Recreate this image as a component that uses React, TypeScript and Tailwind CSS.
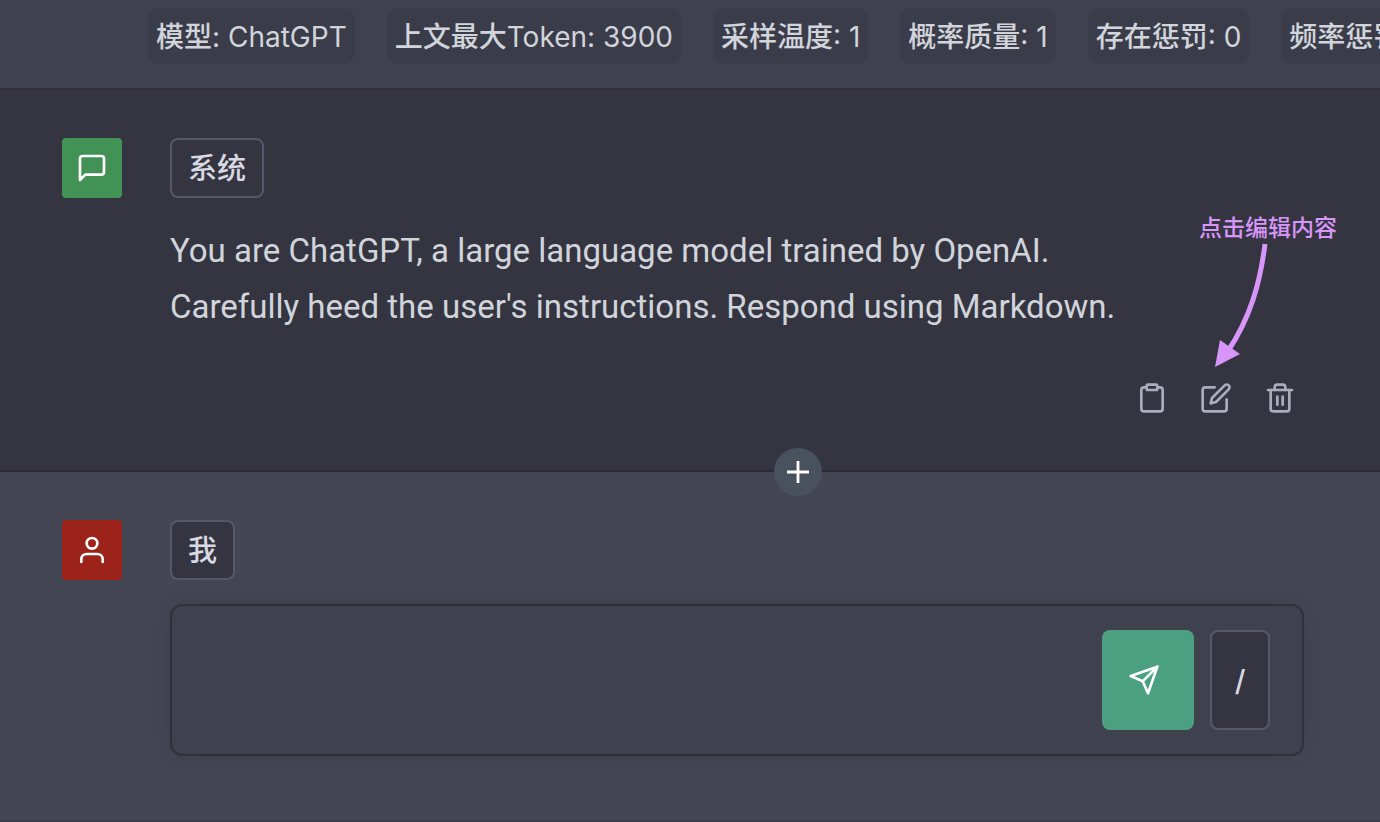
import type { ReactNode } from 'react';
import { FiClipboard, FiEdit, FiMessageSquare, FiSend, FiTrash2, FiUser } from 'react-icons/fi';

const settings = [
  { label: '模型', value: 'ChatGPT' },
  { label: '上文最大Token', value: '3900' },
  { label: '采样温度', value: '1' },
  { label: '概率质量', value: '1' },
  { label: '存在惩罚', value: '0' },
  { label: '频率惩罚', value: '0' },
];

function IconButton({ label, children }: { label: string; children: ReactNode }) {
  return (
    <button type="button" aria-label={label} className="rounded-lg p-2 text-[#acacbe] hover:text-white">
      {children}
    </button>
  );
}

function RoleButton({ children }: { children: ReactNode }) {
  return (
    <button
      type="button"
      className="h-[60px] self-start rounded-lg border-2 border-[#565869] bg-[#343541] px-4 pt-0.5 text-[29px] leading-10 font-medium text-[#d9d9e3]"
    >
      {children}
    </button>
  );
}

function Hint() {
  return (
    <div className="pointer-events-none absolute top-[125px] right-[43px] text-[#d896fa]">
      <p className="text-[23px] leading-7 font-medium">点击编辑内容</p>
      <svg className="absolute top-[27px] left-[13px]" width="60" height="128" viewBox="0 0 60 128" fill="none">
        <path d="M53 2C48 42 38 76 16 109" stroke="currentColor" strokeWidth="5" />
        <path d="M3 125L8 98L28 112Z" fill="currentColor" />
      </svg>
    </div>
  );
}

export default function App() {
  return (
    <div className="min-h-screen w-full overflow-x-hidden bg-[#444654] font-[Roboto,'Noto_Sans_CJK_SC_Medium','Noto_Sans_CJK_SC',sans-serif] text-[#d1d5db]">
      {/* Conversation settings */}
      <header className="flex gap-8 overflow-hidden border-b-2 border-[#303139] bg-[#40414f] pt-2 pb-6 pl-[148px] font-[Inter,'Noto_Sans_CJK_SC_Medium','Noto_Sans_CJK_SC',sans-serif]">
        {settings.map((item) => (
          <span
            key={item.label}
            className="shrink-0 rounded-xl bg-[#3b3c49] px-2 pt-0.5 text-[28px] leading-[54px] whitespace-nowrap"
          >
            {item.label}: {item.value}
          </span>
        ))}
      </header>

      {/* System message */}
      <section className="relative flex gap-12 border-b-2 border-[#2b2c34] bg-[#343541] py-12 pr-[76px] pl-[62px]">
        <div className="flex size-[60px] shrink-0 items-center justify-center rounded-sm bg-[#419254] text-white">
          <FiMessageSquare size={32} />
        </div>
        <div className="flex min-w-0 flex-1 flex-col">
          <RoleButton>系统</RoleButton>
          <p className="mt-[25px] mb-[39px] text-[33px] leading-14">
            You are ChatGPT, a large language model trained by OpenAI.
            <br />
            Carefully heed the user&apos;s instructions. Respond using Markdown.
          </p>
          <div className="flex justify-end gap-4">
            <IconButton label="复制">
              <FiClipboard size={32} />
            </IconButton>
            <IconButton label="编辑">
              <FiEdit size={32} />
            </IconButton>
            <IconButton label="删除">
              <FiTrash2 size={32} />
            </IconButton>
          </div>
        </div>
        <Hint />
        <button
          type="button"
          aria-label="添加消息"
          className="absolute -bottom-[26px] left-[774px] z-10 flex size-12 items-center justify-center rounded-full bg-[#49515f] text-white"
        >
          <svg width="22" height="22" viewBox="0 0 22 22" stroke="currentColor" strokeWidth="2.8">
            <path d="M11 0v22M0 11h22" />
          </svg>
        </button>
      </section>

      {/* User message */}
      <section className="flex gap-12 border-b-2 border-[#3d3e4b] pt-12 pr-[76px] pb-16 pl-[62px]">
        <div className="flex size-[60px] shrink-0 items-center justify-center rounded-sm bg-[#9b2319] text-white">
          <FiUser size={32} />
        </div>
        <div className="flex min-w-0 flex-1 flex-col">
          <RoleButton>我</RoleButton>
          <form className="mt-6 flex gap-4 rounded-xl border-2 border-[#303139] bg-[#40414f] py-6 pr-8 pl-6 shadow-[0_0_30px_rgba(0,0,0,0.1)]">
            <textarea
              aria-label="消息"
              className="h-[100px] min-w-0 flex-1 resize-none bg-transparent text-[33px] leading-12 outline-none"
            />
            <button
              type="button"
              aria-label="发送"
              className="flex w-[92px] items-center justify-center rounded-lg bg-[#4ba081] pr-2 text-white"
            >
              <FiSend size={32} />
            </button>
            <button
              type="button"
              className="w-[60px] rounded-lg border-2 border-[#565869] bg-[#343541] pt-0.5 font-[Inter,sans-serif] text-[29px] font-medium text-[#d9d9e3]"
            >
              /
            </button>
          </form>
        </div>
      </section>
    </div>
  );
}
